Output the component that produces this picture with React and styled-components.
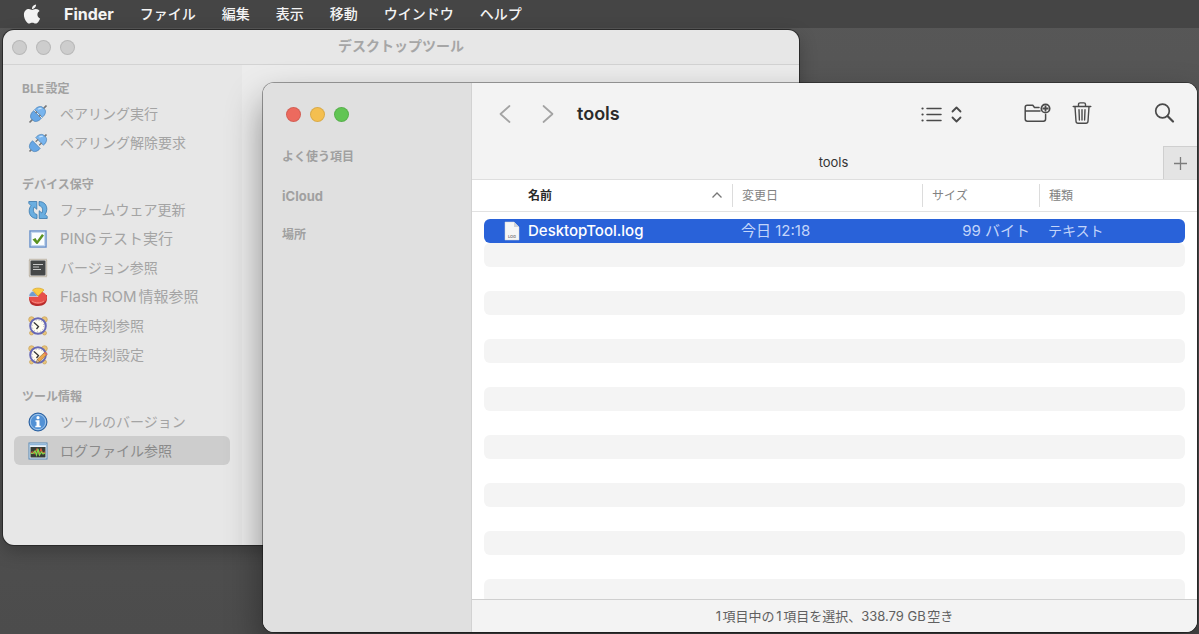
import React, { useState } from "react";
import styled, { createGlobalStyle, css } from "styled-components";
import { FaApple } from "react-icons/fa";

const GlobalStyle = createGlobalStyle`
  * { box-sizing: border-box; }
  body {
    margin: 0;
    background: #525252;
    font-family: Inter, "Noto Sans CJK JP", sans-serif;
    font-size: 14px;
    text-autospace: normal;
  }
  button { font: inherit; color: inherit; background: none; border: 0; padding: 0; }
  ul { list-style: none; margin: 0; padding: 0; }
  h1, h2, h3 { margin: 0; font: inherit; }
  svg { display: block; }
`;

const Desktop = styled.div`
  position: relative;
  min-height: 100vh;
  overflow: hidden;
  background: linear-gradient(#575757, #4c4c4c);
`;

const MenuBar = styled.nav`
  display: flex;
  align-items: center;
  gap: 26px;
  height: 28px;
  padding-left: 21px;
  background: #454545;
  color: #f4f4f4;
`;

const MenuButton = styled.button`
  line-height: 28px;
  font-size: ${(p) => (p.$app ? "16px" : "14px")};
  font-weight: ${(p) => (p.$app ? 700 : 500)};
  white-space: nowrap;
`;

const AppleButton = styled(MenuButton)`
  font-size: 22px;
  margin-right: -5px;
`;

const Window = styled.section`
  position: absolute;
  display: flex;
  overflow: hidden;
  border-radius: 11px;
`;

const ToolWindow = styled(Window)`
  flex-direction: column;
  top: 30px;
  left: 3px;
  right: 400px;
  bottom: 89px;
  background: #e7e7e7;
  box-shadow: 0 0 0 1px #2a2a2a, 0 6px 18px rgba(0, 0, 0, 0.25);
`;

const FinderWindow = styled(Window)`
  top: 83px;
  left: 263px;
  right: 2px;
  bottom: 2px;
  background: #fff;
  box-shadow: 0 0 0 1px rgba(0, 0, 0, 0.35), 0 18px 36px rgba(0, 0, 0, 0.42);
`;

const TitleBar = styled.header`
  display: grid;
  grid-template-columns: 1fr auto 1fr;
  align-items: center;
  height: 35px;
  padding: 0 9px;
  border-bottom: 1px solid #d3d3d3;
`;

const WindowTitle = styled.h1`
  padding-bottom: 2px;
  font-weight: 700;
  line-height: 32px;
  color: #a6a6a6;
`;

const Lights = styled.div`
  display: flex;
  gap: 9px;
`;

const Light = styled.button`
  width: 15px;
  height: 15px;
  border-radius: 50%;
  border: 1px solid rgba(0, 0, 0, 0.1);
  background: ${(p) => p.$color};
`;

const ToolBody = styled.div`
  display: flex;
  flex: 1;
`;

const ToolNav = styled.nav`
  display: flex;
  flex-direction: column;
  gap: 14px;
  width: 239px;
  padding: 10px 12px 10px 11px;
`;

const ToolMain = styled.main`
  flex: 1;
  background: #ececec;
`;

const GroupTitle = styled.h2`
  padding: 0 8px;
  line-height: 28px;
  height: 24px;
  font-size: 12px;
  font-weight: 700;
  color: #a2a2a2;
`;

const NavButton = styled.button`
  display: flex;
  align-items: center;
  gap: 12px;
  width: 100%;
  height: 29px;
  padding: 0 14px;
  border-radius: 6px;
  white-space: nowrap;
  color: #a4a4a4;
  ${(p) =>
    p.$selected &&
    css`
      background: #cdcdcd;
      color: #8a8a8a;
    `}
`;

const NavLabel = styled.span`
  padding-bottom: 2px;
  font-size: ${(p) => (p.$latin ? "15px" : "14px")};
`;

const Sidebar = styled.aside`
  width: 209px;
  flex: none;
  background: #e0e0e0;
  border-right: 1px solid #d2d2d2;
`;

const SidebarTop = styled.div`
  display: flex;
  align-items: center;
  height: 62px;
  padding-left: 23px;
`;

const Places = styled.div`
  display: flex;
  flex-direction: column;
  gap: 15px;
  padding-left: 19px;
`;

const Place = styled.h3`
  height: 24px;
  line-height: 24px;
  font-size: ${(p) => (p.$latin ? "13px" : "12px")};
  font-weight: 700;
  color: #a0a0a0;
`;

const Browser = styled.div`
  flex: 1;
  min-width: 0;
  display: flex;
  flex-direction: column;
`;

const Toolbar = styled.header`
  display: flex;
  align-items: center;
  gap: 62px;
  height: 63px;
  flex: none;
  padding: 0 22px 2px 27px;
  background: #f3f3f3;
  color: #4a4a4a;
`;

const History = styled.div`
  display: flex;
  align-items: center;
  gap: 31px;
  margin-right: -39px;
  color: #a3a3a3;
`;

const FolderTitle = styled.h1`
  flex: 1;
  font-size: 18px;
  font-weight: 600;
  color: #2b2b2b;
`;

const ToolGroup = styled.div`
  display: flex;
  align-items: center;
  gap: ${(p) => p.$gap};
`;

const ViewButton = styled.button`
  display: flex;
  align-items: center;
  gap: 9px;
`;

const TabBar = styled.div`
  display: flex;
  height: 34px;
  flex: none;
  background: #f3f3f3;
  border-bottom: 1px solid #dedede;
`;

const Tab = styled.button`
  flex: 1;
  padding: 0 0 2px 32px;
  font-size: 13px;
  color: #333;
`;

const NewTab = styled.button`
  display: grid;
  place-items: center;
  width: 34px;
  border-left: 1px solid #cfcfcf;
  border-top: 1px solid #cfcfcf;
  background: #e4e4e4;
  color: #7c7c7c;
`;

const FileTable = styled.table`
  display: flex;
  flex-direction: column;
  flex: 1 1 0;
  min-height: 0;
  overflow: hidden;
`;

const HeadGroup = styled.thead`
  display: block;
  flex: none;
  padding: 0 12px;
  border-bottom: 1px solid #e2e2e2;
`;

const FileGroup = styled.tbody`
  display: block;
  flex: 1 1 0;
  min-height: 0;
  overflow: hidden;
  padding: 7px 12px 0;
`;

const columns = css`
  display: grid;
  grid-template-columns: 1fr 190px 117px 146px;
  align-items: center;
`;

const HeadRow = styled.tr`
  ${columns}
  height: 31px;
`;

const HeadCell = styled.th`
  display: flex;
  align-items: center;
  justify-content: space-between;
  height: 23px;
  padding: 0 9px 2px;
  font-size: 12px;
  font-weight: ${(p) => (p.$sorted ? 700 : 400)};
  color: ${(p) => (p.$sorted ? "#2a2a2a" : "#828282")};
  border-left: ${(p) => (p.$sorted ? "0" : "1px solid #dcdcdc")};
  padding-left: ${(p) => (p.$sorted ? "44px" : "9px")};
`;

const FileRow = styled.tr`
  ${columns}
  height: 24px;
  border-radius: 6px;
  background: #2962d9;
  color: #c3d5fa;
`;

const EmptyRow = styled.tr`
  display: block;
  height: 24px;
  border-radius: 6px;
  &:nth-child(even) {
    background: #f4f4f4;
  }
`;

const EmptyCell = styled.td`
  display: block;
  padding: 0;
`;

const Cell = styled.td`
  padding: 0 9px;
  line-height: 24px;
  white-space: nowrap;
  font-size: ${(p) => (p.$numeric ? "15px" : "14px")};
  text-align: ${(p) => p.$align || "left"};
`;

const NameCell = styled(Cell)`
  display: flex;
  align-items: center;
  gap: 8px;
  padding-left: 20px;
  font-size: 15px;
  font-weight: 500;
  color: #fff;
`;

const StatusBar = styled.footer`
  flex: none;
  height: 33px;
  line-height: 32px;
  border-top: 1px solid #cfcfcf;
  background: #f3f3f3;
  text-align: center;
  font-size: 13px;
  color: #606060;
`;

const Icon = ({ w = 20, h = 20, children, ...rest }) => (
  <svg width={w} height={h} viewBox={`0 0 ${w} ${h}`} fill="none" aria-hidden="true" {...rest}>
    {children}
  </svg>
);

const PlugIcon = ({ apart }) => {
  const d = apart ? 1.6 : 0;
  return (
    <Icon>
      <g transform="rotate(45 10 10)" stroke="#4680b8" strokeWidth="0.7">
        <path d="M10 -2v5M10 17v5" stroke="#777" strokeWidth="1.700" />
        <path d={`M4.600 ${9.3 - d}c-.5-4.500 2-7.300 4-7.300h2.800c2 0 4.500 2.800 4 7.300z`} fill="#79b5ee" />
        <path d={`M4.600 ${10.7 + d}c-.5 4.500 2 7.300 4 7.300h2.800c2 0 4.500-2.800 4-7.300z`} fill="#67a7e6" />
        <path d={`M7.500 ${9 - d}v${apart ? 3.4 : 2}M12.500 ${9 - d}v${apart ? 3.4 : 2}`} stroke="#777" strokeWidth="1.300" />
        <path d={`M6.800 ${6.5 - d}c.3-1.600 1-2.500 2-2.700`} stroke="#c4e2fc" strokeWidth="1.300" />
      </g>
    </Icon>
  );
};

const RefreshIcon = () => (
  <Icon>
    <g fill="#6aaee0" stroke="#3a78ad" strokeWidth="0.8" strokeLinejoin="round">
      <path d="M9 18.500C4 18.500 1 15 1.200 10.500c.1-2 .8-3.600 1.800-4.800L.8 3.300V1.500h8v7.800L6.200 7C4.800 9.500 5 13.500 9 14.500z" />
      <path d="M11 1.500c5 0 8 3.500 7.800 8-.1 2-.8 3.600-1.800 4.800l2.200 2.200v2h-8v-7.800l2.600 2.300C15.200 10.500 15 6.500 11 5.500z" />
    </g>
  </Icon>
);

const CheckIcon = () => (
  <Icon>
    <rect x="2" y="2" width="16" height="16" fill="#fafdff" stroke="#6b93cb" strokeWidth="1.500" />
    <rect x="3.500" y="3.500" width="13" height="13" stroke="#c6d9ef" />
    <path d="M4.500 10.500l3-1.500 1.600 2.800L14 5l2 1.500-6.500 8.500h-1z" fill="#5b9220" />
  </Icon>
);

const ChipIcon = () => (
  <Icon>
    <rect x="1.500" y="1.500" width="17" height="17" stroke="#a69880" strokeWidth="1.500" strokeDasharray="1 1" />
    <rect x="2.500" y="2.500" width="15" height="15" rx="1" fill="#454748" />
    <path d="M5 6.500h10M5 9h6M5 11.500h8" stroke="#c7c7c7" strokeWidth="1.200" />
  </Icon>
);

const PieIcon = () => (
  <Icon>
    <path d="M1 10c0 7 3 9 9 9s9-3 9-7.500V8z" fill="#b82d2d" />
    <ellipse cx="10" cy="10.500" rx="9" ry="6.500" fill="#e6504a" />
    <path d="M10 9.500H.8C.8 6.500 3 5 5 4z" fill="#6f9dcd" stroke="#e9eef4" strokeWidth="0.600" />
    <path d="M10 9L4.500 3C7 .5 13 .5 16 3z" fill="#f9cc45" stroke="#d8a320" strokeWidth="0.700" />
    <path d="M4 14c3 2.500 9 2.500 12 0" stroke="#f58b82" />
  </Icon>
);

const ClockIcon = ({ edit }) => (
  <Icon>
    <g fill="#e8c47a" stroke="#c59b4c" strokeWidth="0.600">
      <circle cx="3.500" cy="3.500" r="2.800" />
      <circle cx="16.500" cy="3.500" r="2.800" />
      <circle cx="3.500" cy="17" r="2" />
      <circle cx="16.500" cy="17" r="2" />
    </g>
    <circle cx="10" cy="10" r="7.800" fill="#fffdf0" stroke="#6668b5" strokeWidth="2" />
    <circle cx="10" cy="10" r="5.800" stroke="#8e8bb0" strokeWidth="1" strokeDasharray="0.700 2.337" />
    <path d="M6 6.500l4.500 4L8.500 13" stroke="#333" strokeWidth="1.300" />
    {edit && (
      <>
        <path d="M8.500 17.500l1-3.500L17 7l2.300 2.200-7.500 7.300z" fill="#eea64b" stroke="#96713d" strokeWidth="0.700" />
        <path d="M16 8l2.300 2.200L19.500 9 17.200 6.800z" fill="#d56b68" />
        <path d="M8.500 17.500l1-3 2 2z" fill="#f8e2bb" stroke="#705a3c" strokeWidth="0.500" />
      </>
    )}
  </Icon>
);

const InfoIcon = () => (
  <Icon>
    <circle cx="10" cy="10" r="9" fill="#3b78bf" stroke="#285f9f" />
    <circle cx="10" cy="10" r="7.700" fill="#5291d5" stroke="#b1d1f0" strokeWidth="0.900" />
    <circle cx="10" cy="5.700" r="1.600" fill="#fff" />
    <path d="M7.500 8.300h4v5.500h1.300v1.400H7.300v-1.400h1.200V9.700h-1z" fill="#fff" />
  </Icon>
);

const LogIcon = () => (
  <Icon>
    <rect x="1" y="2" width="18" height="16" fill="#e9f1f8" stroke="#5989b6" />
    <path d="M1.500 3.500h17" stroke="#8db5d9" strokeWidth="1.500" />
    <rect x="2.500" y="6" width="15" height="10.500" fill="#363d35" />
    <path d="M3 11.500l2-.5 1.500 1.500L9 8l2 5 2-5 1.500 4 2.500-1" stroke="#d45a38" strokeWidth="1.200" />
    <path d="M3 12.500h2L7 10l1.500 4L10 8l1.500 6 2-3 1.500 2 2-1" stroke="#85d94b" strokeWidth="1.200" />
  </Icon>
);

const FileIcon = () => (
  <Icon w={16} h={20}>
    <path d="M1 1h9l5 5v13H1z" fill="#f6f6f6" stroke="#d5d5d5" strokeWidth="0.500" />
    <path d="M10 1v5h5z" fill="#d0d3d8" />
    <text x="8" y="16.500" fontSize="4" fontWeight="600" textAnchor="middle" fill="#777">LOG</text>
  </Icon>
);

const Chevron = ({ flip }) => (
  <Icon w={12} h={20}>
    <path d={flip ? "M1.500 2l9 8-9 8" : "M10.500 2l-9 8 9 8"} stroke="currentColor" strokeWidth="1.700" strokeLinecap="round" strokeLinejoin="round" />
  </Icon>
);

const ListIcon = () => (
  <Icon w={21} h={20}>
    <path d="M6 4.500h14M6 10.500h14M6 16.500h14" stroke="currentColor" strokeWidth="1.500" strokeLinecap="round" />
    <path d="M1.500 4.500h.1M1.500 10.500h.1M1.500 16.500h.1" stroke="currentColor" strokeWidth="2.200" strokeLinecap="round" />
  </Icon>
);

const UpDownIcon = () => (
  <Icon w={11} h={20}>
    <path d="M1.500 7.500l4-4 4 4M1.500 13.500l4 4 4-4" stroke="currentColor" strokeWidth="1.800" strokeLinecap="round" strokeLinejoin="round" />
  </Icon>
);

const NewFolderIcon = () => (
  <Icon w={27} h={24}>
    <path d="M15 5.500h-4.500L8.800 3.300H3.200c-1.300 0-2 .7-2 2V17c0 1.400.8 2.200 2.200 2.200h16c1.400 0 2.200-.8 2.200-2.200v-4.500M1.500 9h14.500" stroke="currentColor" strokeWidth="1.500" strokeLinecap="round" strokeLinejoin="round" />
    <circle cx="21.500" cy="6.500" r="4.200" stroke="currentColor" strokeWidth="1.700" />
    <path d="M21.500 3.500v6M18.500 6.500h6" stroke="currentColor" strokeWidth="1.800" />
  </Icon>
);

const TrashIcon = () => (
  <Icon w={20} h={24}>
    <path d="M1.200 4.500h17.600M6.500 4.200V2.500c0-1 .6-1.600 1.600-1.600h3.800c1 0 1.600.6 1.600 1.600v1.700M3 4.800l1 14.500c.1 1.200.9 2 2 2h8c1.100 0 1.900-.8 2-2l1-14.500M7 7.800l.4 10.200M10 7.800V18M13 7.800L12.600 18" stroke="currentColor" strokeWidth="1.400" strokeLinecap="round" strokeLinejoin="round" />
  </Icon>
);

const SearchIcon = () => (
  <Icon w={21} h={22}>
    <circle cx="8.500" cy="8" r="6.800" stroke="currentColor" strokeWidth="1.700" />
    <path d="M13.500 13l5.500 5.500" stroke="currentColor" strokeWidth="2.200" strokeLinecap="round" />
  </Icon>
);

const menus = ["ファイル", "編集", "表示", "移動", "ウインドウ", "ヘルプ"];

const groups = [
  { title: "BLE設定", items: [["ペアリング実行", <PlugIcon />], ["ペアリング解除要求", <PlugIcon apart />]] },
  {
    title: "デバイス保守",
    items: [
      ["ファームウェア更新", <RefreshIcon />],
      ["PINGテスト実行", <CheckIcon />],
      ["バージョン参照", <ChipIcon />],
      ["Flash ROM情報参照", <PieIcon />],
      ["現在時刻参照", <ClockIcon />],
      ["現在時刻設定", <ClockIcon edit />],
    ],
  },
  { title: "ツール情報", items: [["ツールのバージョン", <InfoIcon />], ["ログファイル参照", <LogIcon />]] },
];

const WindowLights = ({ colors }) => (
  <Lights>
    <Light $color={colors[0]} aria-label="閉じる" />
    <Light $color={colors[1]} aria-label="しまう" />
    <Light $color={colors[2]} aria-label="フルスクリーン" />
  </Lights>
);

export default function App() {
  const [selected, setSelected] = useState("ログファイル参照");
  return (
    <Desktop lang="ja">
      <GlobalStyle />
      <MenuBar>
        <AppleButton aria-label="Apple"><FaApple /></AppleButton>
        <MenuButton $app>Finder</MenuButton>
        {menus.map((m) => <MenuButton key={m}>{m}</MenuButton>)}
      </MenuBar>

      <ToolWindow>
        <TitleBar>
          <WindowLights colors={["#cdcdcd", "#cdcdcd", "#cdcdcd"]} />
          <WindowTitle>デスクトップツール</WindowTitle>
        </TitleBar>
        <ToolBody>
          <ToolNav>
            {groups.map((g) => (
              <div key={g.title}>
                <GroupTitle>{g.title}</GroupTitle>
                <ul>
                  {g.items.map(([label, icon]) => (
                    <li key={label}>
                      <NavButton $selected={label === selected} onClick={() => setSelected(label)}>
                        {icon}
                        <NavLabel $latin={/^[A-Z]/.test(label)}>{label}</NavLabel>
                      </NavButton>
                    </li>
                  ))}
                </ul>
              </div>
            ))}
          </ToolNav>
          <ToolMain />
        </ToolBody>
      </ToolWindow>

      <FinderWindow>
        <Sidebar>
          <SidebarTop>
            <WindowLights colors={["#ec6a5e", "#f4bf50", "#61c554"]} />
          </SidebarTop>
          <Places>
            <Place>よく使う項目</Place>
            <Place $latin>iCloud</Place>
            <Place>場所</Place>
          </Places>
        </Sidebar>
        <Browser>
          <Toolbar>
            <History>
              <button aria-label="戻る"><Chevron /></button>
              <button aria-label="進む"><Chevron flip /></button>
            </History>
            <FolderTitle>tools</FolderTitle>
            <ViewButton aria-label="リスト表示">
              <ListIcon />
              <UpDownIcon />
            </ViewButton>
            <ToolGroup $gap="21px">
              <button aria-label="新規フォルダ"><NewFolderIcon /></button>
              <button aria-label="ゴミ箱に入れる"><TrashIcon /></button>
            </ToolGroup>
            <button aria-label="検索"><SearchIcon /></button>
          </Toolbar>
          <TabBar>
            <Tab>tools</Tab>
            <NewTab aria-label="新規タブ">
              <Icon w={13} h={13}>
                <path d="M6.500 0v13M0 6.500h13" stroke="currentColor" strokeWidth="1.300" />
              </Icon>
            </NewTab>
          </TabBar>
          <FileTable>
            <HeadGroup>
              <HeadRow>
                <HeadCell $sorted scope="col">
                  名前
                  <Icon w={12} h={8}>
                    <path d="M1.500 6.500L6 2l4.500 4.500" stroke="#777" strokeWidth="1.300" />
                  </Icon>
                </HeadCell>
                <HeadCell scope="col">変更日</HeadCell>
                <HeadCell scope="col">サイズ</HeadCell>
                <HeadCell scope="col">種類</HeadCell>
              </HeadRow>
            </HeadGroup>
            <FileGroup>
              <FileRow>
                <NameCell><FileIcon />DesktopTool.log</NameCell>
                <Cell $numeric>今日 12:18</Cell>
                <Cell $numeric $align="right">99 バイト</Cell>
                <Cell>テキスト</Cell>
              </FileRow>
              {Array.from({ length: 15 }, (_, i) => (
                <EmptyRow key={i} aria-hidden="true"><EmptyCell /></EmptyRow>
              ))}
            </FileGroup>
          </FileTable>
          <StatusBar>1項目中の1項目を選択、338.79 GB空き</StatusBar>
        </Browser>
      </FinderWindow>
    </Desktop>
  );
}
